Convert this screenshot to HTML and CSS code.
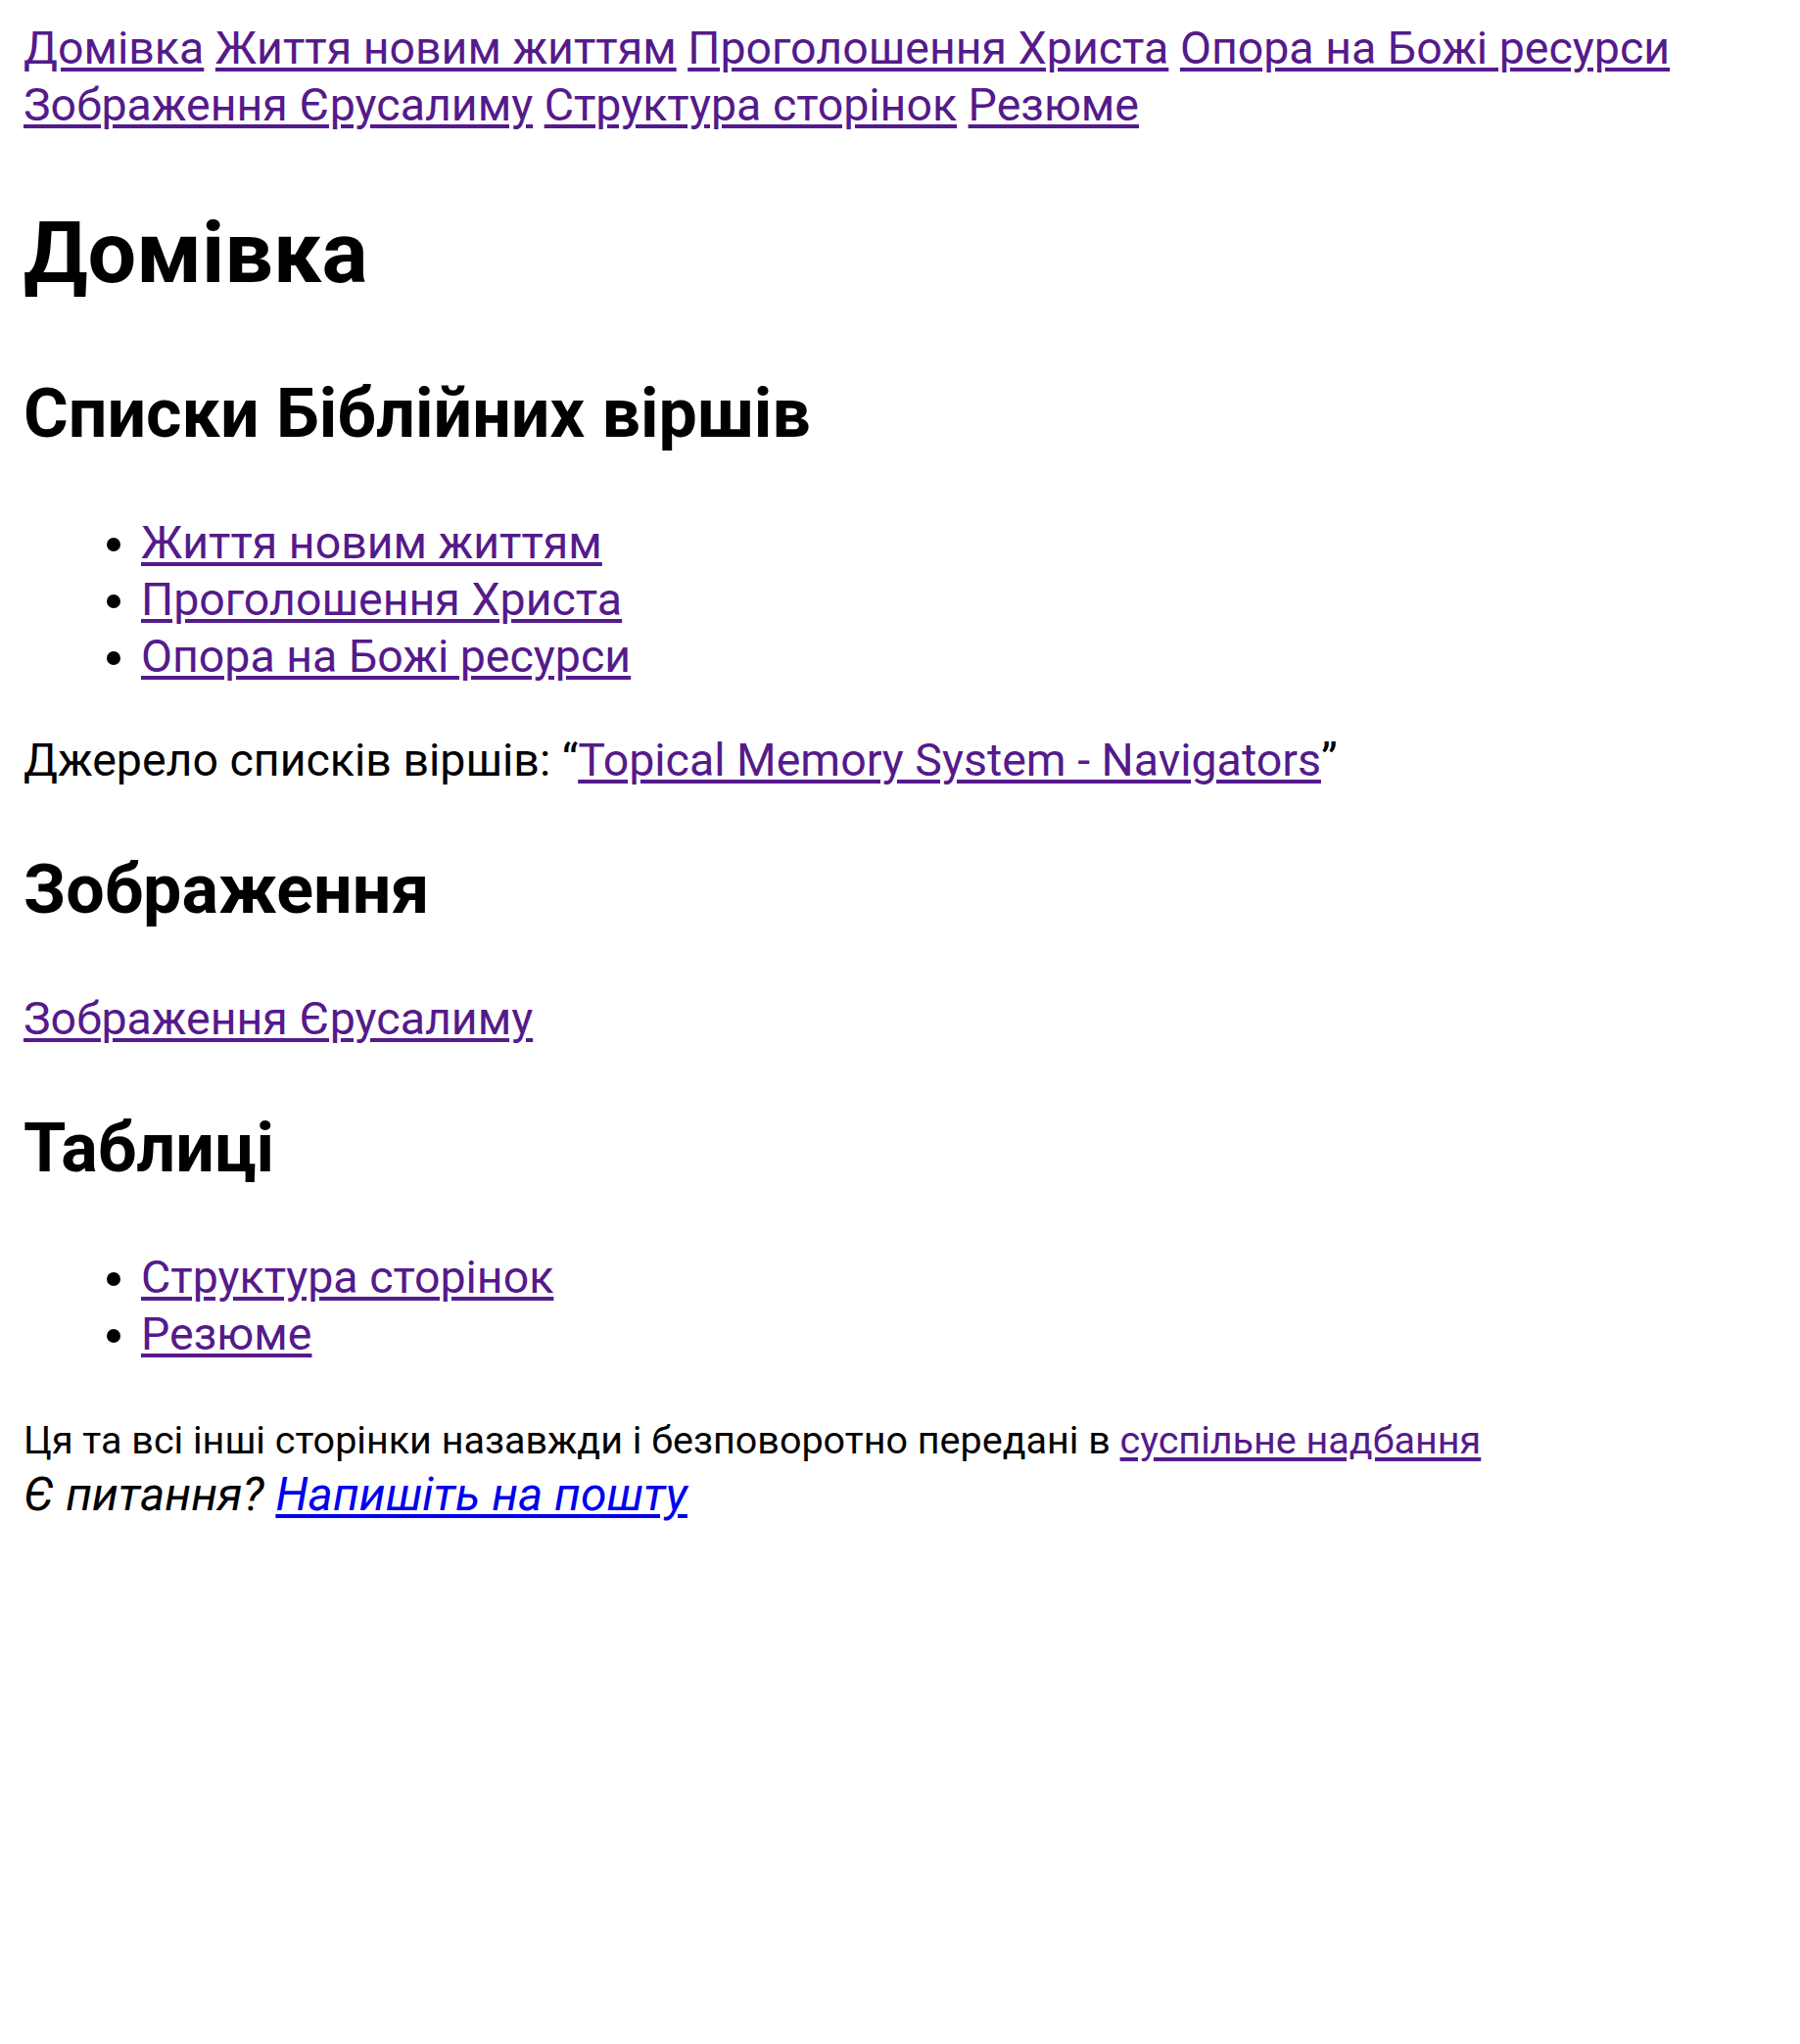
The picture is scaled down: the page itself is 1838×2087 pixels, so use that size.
FILE: index.html
```html
<!DOCTYPE html>
<html lang="uk">
<head>
<meta charset="utf-8">
<title>Домівка</title>
<link rel="stylesheet" href="styles.css">
</head>
<body>
<nav class="topnav">
<a href="#">Домівка</a> <a href="#">Життя новим життям</a> <a href="#">Проголошення Христа</a> <a href="#">Опора на Божі ресурси</a> <a href="#">Зображення Єрусалиму</a> <a href="#">Структура сторінок</a> <a href="#">Резюме</a>
</nav>
<h1 class="title">Домівка</h1>
<h2 class="section">Списки Біблійних віршів</h2>
<ul class="list">
<li><a href="#">Життя новим життям</a></li>
<li><a href="#">Проголошення Христа</a></li>
<li><a href="#">Опора на Божі ресурси</a></li>
</ul>
<p class="para">Джерело списків віршів: “<a href="#">Topical Memory System - Navigators</a>”</p>
<h2 class="section">Зображення</h2>
<p class="para"><a href="#">Зображення Єрусалиму</a></p>
<h2 class="section">Таблиці</h2>
<ul class="list">
<li><a href="#">Структура сторінок</a></li>
<li><a href="#">Резюме</a></li>
</ul>
<p class="para footer"><small class="license">Ця та всі інші сторінки назавжди і безповоротно передані в <a href="#">суспільне надбання</a></small><br><em class="ask">Є питання? <a class="mail" href="#">Напишіть на пошту</a></em></p>
</body>
</html>
```
FILE: styles.css
```css
html { font-family: Roboto, "Noto Sans", sans-serif; }
body { margin: 20px 24px 24px; font-size: 46.5px; line-height: 58px; color: #000; background: #fff; }
a { color: #551a8b; text-decoration-thickness: 4px; text-underline-offset: 4px; }
a.mail { color: #0000ee; }
.title { font-size: 88px; line-height: 115px; font-weight: 700; margin: 64px 0; }
.section { font-size: 70px; line-height: 86px; font-weight: 700; margin: 60px 0; }
.list { margin: 48px 0; padding-left: 120px; }
.para { margin: 48px 0; }
.license { font-size: 39.5px; line-height: 1; }
.ask { font-size: 48px; line-height: 1; font-style: italic; }
```
